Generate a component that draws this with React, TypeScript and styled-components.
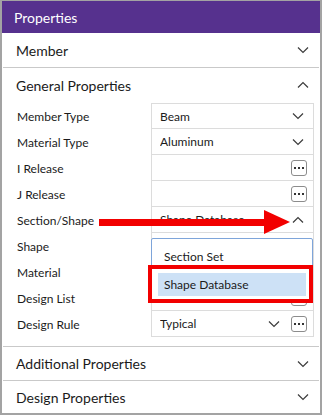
import React from 'react';
import styled, { createGlobalStyle } from 'styled-components';

const GlobalStyle = createGlobalStyle`
  html, body {
    margin: 0;
    padding: 0;
    background: #ffffff;
  }
  body {
    font-family: Lato, 'Noto Sans', sans-serif;
    color: #1b1b1b;
  }
`;

const Frame = styled.div`
  position: relative;
  width: 322px;
  height: 415px;
  box-sizing: border-box;
  border: 2px solid #a3a3a3;
  border-top-width: 1px;
  background: #fff;
  overflow: hidden;
`;

const TitleBar = styled.div`
  height: 32px;
  display: flex;
  align-items: center;
  padding-left: 12px;
  background: #56318e;
  color: #fff;
  font-size: 14px;
`;

const Section = styled.div<{ $last?: boolean }>`
  margin: 0 1px;
  border-bottom: ${(p) => (p.$last ? 'none' : '1px solid #c9c9c9')};
`;

const SectionHeader = styled.div<{ $h?: number }>`
  height: ${(p) => p.$h ?? 34}px;
  display: flex;
  align-items: center;
  justify-content: space-between;
  padding: 0 10px 0 13px;
  font-size: 14px;
`;

const Grid = styled.div`
  display: grid;
  grid-template-columns: 134px 163px;
  margin: 1px 0 9px 14px;
`;

const Label = styled.div`
  height: 26px;
  display: flex;
  align-items: center;
  font-size: 12px;
`;

const Cell = styled.div<{ $first?: boolean; $dots?: boolean }>`
  position: relative;
  height: 26px;
  box-sizing: border-box;
  display: flex;
  align-items: center;
  gap: 11px;
  padding: 0 ${(p) => (p.$dots ? 6 : 9)}px 0 8px;
  border: 1px solid #dcdcdc;
  border-top-width: ${(p) => (p.$first ? 1 : 0)}px;
  font-size: 12px;
`;

const Value = styled.span`
  flex: 1;
  white-space: nowrap;
  overflow: hidden;
`;

const DotsButton = styled.div`
  width: 16px;
  height: 16px;
  box-sizing: border-box;
  border: 1px solid #8c8c8c;
  border-radius: 3px;
  display: flex;
  align-items: center;
  justify-content: center;
  gap: 2px;
  background: #fff;
  span {
    width: 2px;
    height: 2px;
    background: #333;
  }
`;

const Popup = styled.div`
  position: absolute;
  left: -1px;
  top: 31px;
  width: 162px;
  height: 64px;
  box-sizing: border-box;
  border: 1px solid #7ea5da;
  border-radius: 2px;
  background: #fff;
  padding: 3px 6px;
  z-index: 2;
`;

const Option = styled.div<{ $active?: boolean }>`
  height: ${(p) => (p.$active ? 23 : 25)}px;
  display: flex;
  align-items: center;
  padding-left: 6px;
  margin-top: ${(p) => (p.$active ? 4 : 2)}px;
  background: ${(p) => (p.$active ? '#cde1f6' : 'transparent')};
  font-size: 12px;
`;

const Highlight = styled.div`
  position: absolute;
  left: -4px;
  top: 26px;
  width: 165px;
  height: 38px;
  box-sizing: border-box;
  border: 4px solid #f20000;
`;

const Arrow = styled.svg`
  position: absolute;
  left: 97px;
  top: 209px;
  z-index: 3;
`;

const Chevron = ({ up = false }: { up?: boolean }) => (
  <svg width="12" height="8" viewBox="0 0 12 8">
    <path
      d={up ? 'M1 6.5 L6 1.5 L11 6.5' : 'M1 1.5 L6 6.5 L11 1.5'}
      fill="none"
      stroke="#3c3c3c"
      strokeWidth="1.2"
    />
  </svg>
);

const Dots = () => (
  <DotsButton>
    <span />
    <span />
    <span />
  </DotsButton>
);

type Row = { label: string; value?: string; chevron?: 'up' | 'down'; dots?: boolean; popup?: boolean };

const rows: Row[] = [
  { label: 'Member Type', value: 'Beam', chevron: 'down' },
  { label: 'Material Type', value: 'Aluminum', chevron: 'down' },
  { label: 'I Release', dots: true },
  { label: 'J Release', dots: true },
  { label: 'Section/Shape', value: 'Shape Database', chevron: 'up', popup: true },
  { label: 'Shape', dots: true },
  { label: 'Material', dots: true },
  { label: 'Design List', dots: true },
  { label: 'Design Rule', value: 'Typical', chevron: 'down', dots: true },
];

const App = () => {
  return (
    <>
      <GlobalStyle />
      <Frame>
        <TitleBar>Properties</TitleBar>
        <Section>
          <SectionHeader>
            Member
            <Chevron />
          </SectionHeader>
        </Section>
        <Section>
          <SectionHeader>
            General Properties
            <Chevron up />
          </SectionHeader>
          <Grid>
            {rows.map((r, i) => (
              <React.Fragment key={r.label}>
                <Label>{r.label}</Label>
                <Cell $first={i === 0} $dots={r.dots}>
                  <Value>{r.value}</Value>
                  {r.chevron && <Chevron up={r.chevron === 'up'} />}
                  {r.dots && <Dots />}
                  {r.popup && (
                    <Popup>
                      <Option>Section Set</Option>
                      <Option $active>Shape Database</Option>
                      <Highlight />
                    </Popup>
                  )}
                </Cell>
              </React.Fragment>
            ))}
          </Grid>
        </Section>
        <Section>
          <SectionHeader $h={33}>
            Additional Properties
            <Chevron />
          </SectionHeader>
        </Section>
        <Section $last>
          <SectionHeader $h={32}>
            Design Properties
            <Chevron />
          </SectionHeader>
        </Section>
        <Arrow width="194" height="24" viewBox="0 0 194 24">
          <rect x="0" y="9" width="168" height="7" fill="#f20000" />
          <polygon points="165,0 191,12 165,24" fill="#f20000" />
        </Arrow>
      </Frame>
    </>
  );
};

export default App;
